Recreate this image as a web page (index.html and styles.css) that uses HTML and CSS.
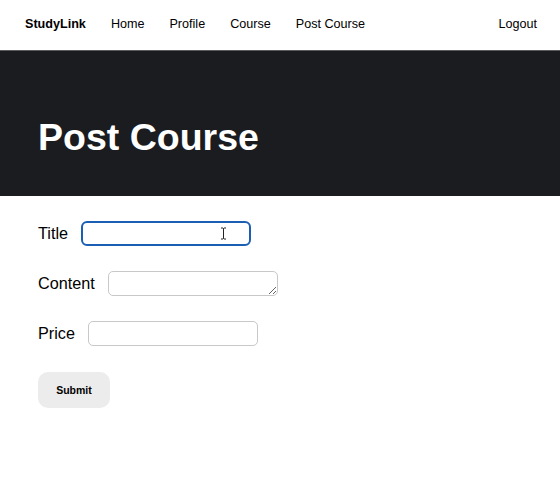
FILE: index.html
```html
<!DOCTYPE html>
<html>
<head>
<meta charset="utf-8">
<link rel="stylesheet" href="styles.css">
</head>
<body>
<nav class="nav">
  <a class="brand">StudyLink</a>
  <a class="link">Home</a>
  <a class="link">Profile</a>
  <a class="link">Course</a>
  <a class="link">Post Course</a>
  <a class="link logout">Logout</a>
</nav>
<header class="hero">
  <h1>Post Course</h1>
</header>
<form class="form">
  <div class="row">
    <label>Title</label>
    <span class="field-wrap">
      <input class="field focused" type="text">
      <svg class="cursor" width="7" height="13" viewBox="0 0 7 13"><path d="M1 1h2l0.5 0.5l0.5-0.5h2M3.5 1.5v10M1 12h2l0.5-0.5l0.5 0.5h2" fill="none" stroke="#222" stroke-width="1"/></svg>
    </span>
  </div>
  <div class="row">
    <label>Content</label>
    <textarea class="field area"></textarea>
  </div>
  <div class="row">
    <label>Price</label>
    <input class="field" type="text">
  </div>
  <button class="submit" type="button">Submit</button>
</form>
</body>
</html>
```
FILE: styles.css
```css
* { box-sizing: border-box; }
body {
  margin: 0;
  font-family: "Liberation Sans", Arial, sans-serif;
  color: #000;
  background: #fff;
}
.nav {
  height: 50px;
  display: flex;
  align-items: center;
  gap: 25px;
  padding: 0 23px 2px 25px;
  font-size: 12.6px;
}
.brand { font-weight: bold; }
.logout { margin-left: auto; }
.hero {
  height: 146px;
  background: #1b1c1f;
  border-top: 1px solid #5a5a5c;
  display: flex;
  align-items: flex-end;
  padding: 0 0 40px 38px;
}
.hero h1 {
  margin: 0;
  color: #fff;
  font-size: 37.5px;
  font-weight: bold;
  line-height: 1;
}
.form {
  padding: 25px 38px 0;
  display: flex;
  flex-direction: column;
  align-items: flex-start;
}
.row {
  display: flex;
  align-items: center;
  gap: 13px;
  height: 25px;
  margin-bottom: 25px;
  font-size: 16.2px;
}
.field-wrap { position: relative; display: flex; }
.field {
  width: 170px;
  height: 25px;
  border: 1px solid #c8c8c8;
  border-radius: 5px;
  background: #fff;
  margin: 0;
  padding: 2px 6px;
  font: inherit;
  font-size: 13px;
}
.field.focused {
  border: 2px solid #1b5fb4;
  border-radius: 6px;
  height: 25px;
  outline: none;
}
.area { resize: vertical; }
.cursor {
  position: absolute;
  left: 139px;
  top: 6px;
}
.submit {
  margin-top: 1px;
  width: 72px;
  height: 36px;
  border: none;
  border-radius: 10px;
  background: #ececec;
  font-family: "Liberation Sans", Arial, sans-serif;
  font-weight: bold;
  font-size: 10.5px;
  color: #000;
}
```
